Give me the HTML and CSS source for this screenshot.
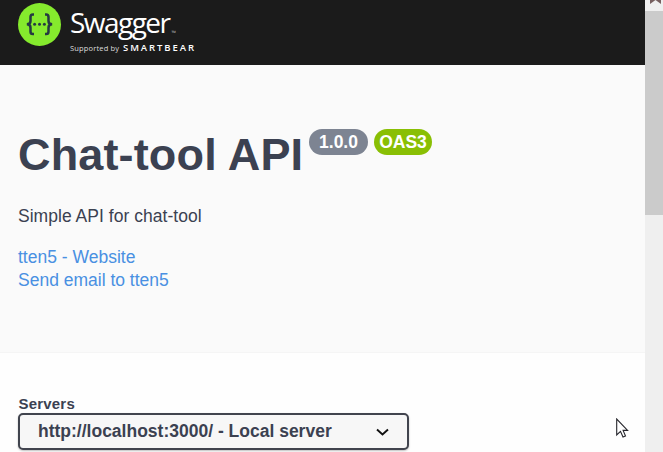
FILE: index.html
```
<!DOCTYPE html>
<html lang="en">
<head>
<meta charset="utf-8">
<title>Chat-tool API</title>
<link rel="stylesheet" href="styles.css">
</head>
<body>
<div class="viewport">
  <div class="page">
    <header class="topbar">
      <svg class="logo" width="180" height="65" viewBox="18 0 180 65" role="img" aria-label="Swagger">
        <circle cx="39.5" cy="24.5" r="21.5" fill="#85ea2d"/>
        <g fill="none" stroke="#253a42" stroke-width="2.500">
          <path d="M34 14.500h-1.200q-2.300 0-2.300 2.600v3.800q0 3.400-3.700 3.400q3.700 0 3.700 3.400v3.800q0 2.600 2.300 2.600h1.200"/>
          <path d="M45 14.500h1.200q2.300 0 2.300 2.600v3.800q0 3.400 3.700 3.400q-3.700 0-3.700 3.400v3.800q0 2.600-2.300 2.600h-1.200"/>
        </g>
        <g fill="#253a42"><circle cx="34.600" cy="24.300" r="1.500"/><circle cx="39.500" cy="24.300" r="1.500"/><circle cx="44.400" cy="24.300" r="1.500"/></g>
        <text class="wordmark" x="70" y="33" textLength="101">Swagger</text>
        <text class="trademark" x="171.500" y="34.500">™</text>
        <text class="supported" x="70" y="51" textLength="49">Supported by</text>
        <text class="smartbear" x="123" y="51" textLength="71">SMARTBEAR</text>
      </svg>
    </header>
    <section class="info">
      <div class="heading">
        <h1>Chat-tool API</h1>
        <span class="badge version">1.0.0</span>
        <span class="badge oas">OAS3</span>
      </div>
      <p class="description">Simple API for chat-tool</p>
      <div class="contact">
        <a>tten5 - Website</a>
        <a>Send email to tten5</a>
      </div>
    </section>
    <section class="servers">
      <span class="label">Servers</span>
      <div class="select">
        <span>http://localhost:3000/ - Local server</span>
        <svg width="14" height="10" viewBox="0 0 14 10"><path d="M2 2.500L7.500 7.500L13 2.500" fill="none" stroke="#111" stroke-width="1.900"/></svg>
      </div>
    </section>
  </div>
  <div class="scrollbar">
    <svg width="18" height="11" viewBox="0 0 18 11"><path d="M5 0V4L10.500 0L16 4V0L14 0L10.500-3L7 0Z" fill="#765f5f"/></svg>
    <div class="thumb"></div>
  </div>
</div>
<svg class="cursor" width="13" height="21" viewBox="0 0 13 21"><path d="M.7 1V17L4.500 13.400L7 19L9.500 18L7.100 12.400H11.600Z" fill="#fff" stroke="#26262c" stroke-width="1.100"/></svg>
</body>
</html>
```
FILE: styles.css
```
* { box-sizing: border-box; }
body { margin: 0; overflow: hidden; font-family: "Liberation Sans", Arial, sans-serif; color: #3b4151; }
.viewport { display: flex; width: 663px; height: 452px; }
.page { width: 645px; background: #fefefe; }
.topbar { height: 65px; padding-left: 18px; background: #1b1b1b; }
.logo { display: block; }
.wordmark { font: 28px "Open Sans", sans-serif; fill: #fff; }
.trademark { font: 6px "Open Sans", sans-serif; fill: #aaa; }
.supported { font: 7.5px "Open Sans", sans-serif; fill: #ddd; }
.smartbear { font: 600 9.5px "Open Sans", sans-serif; fill: #fff; }
.info { height: 288px; padding: 63px 18px 0; background: #fafafa; border-bottom: 1px solid #f5f5f5; }
.heading { display: flex; align-items: flex-start; height: 55px; }
h1 { margin: 0 6px 0 0; width: 285px; font-size: 45px; line-height: 53px; letter-spacing: .15px; white-space: nowrap; }
.badge { display: flex; align-items: center; justify-content: center; height: 26px; margin-top: 1px; border-radius: 13px; color: #fff; font-size: 17.5px; font-weight: 700; }
.version { width: 59px; margin-right: 6px; background: #7d8492; }
.oas { width: 58px; background: #89bf04; }
.description { margin: 22px 0 0; font-size: 17.5px; line-height: 22px; letter-spacing: .03px; }
.contact { display: flex; flex-direction: column; margin-top: 19px; font-size: 17.5px; line-height: 23px; color: #4990e2; }
.servers { padding: 42px 18px 0; }
.label { display: block; height: 18px; padding-left: .5px; font-size: 15px; font-weight: 700; line-height: 18px; letter-spacing: .2px; }
.select { display: flex; align-items: center; justify-content: space-between; width: 391px; height: 37px; padding: 0 18px; border: 2px solid #41444e; border-radius: 5px; background: #f7f7f7; box-shadow: 0 1px 2px rgba(0,0,0,.25); font-size: 17.5px; font-weight: 700; }
.scrollbar { width: 18px; background: #efefef; }
.scrollbar svg { display: block; }
.thumb { height: 204px; background: #cbcbcb; }
.cursor { position: absolute; left: 616px; top: 418px; }
```
